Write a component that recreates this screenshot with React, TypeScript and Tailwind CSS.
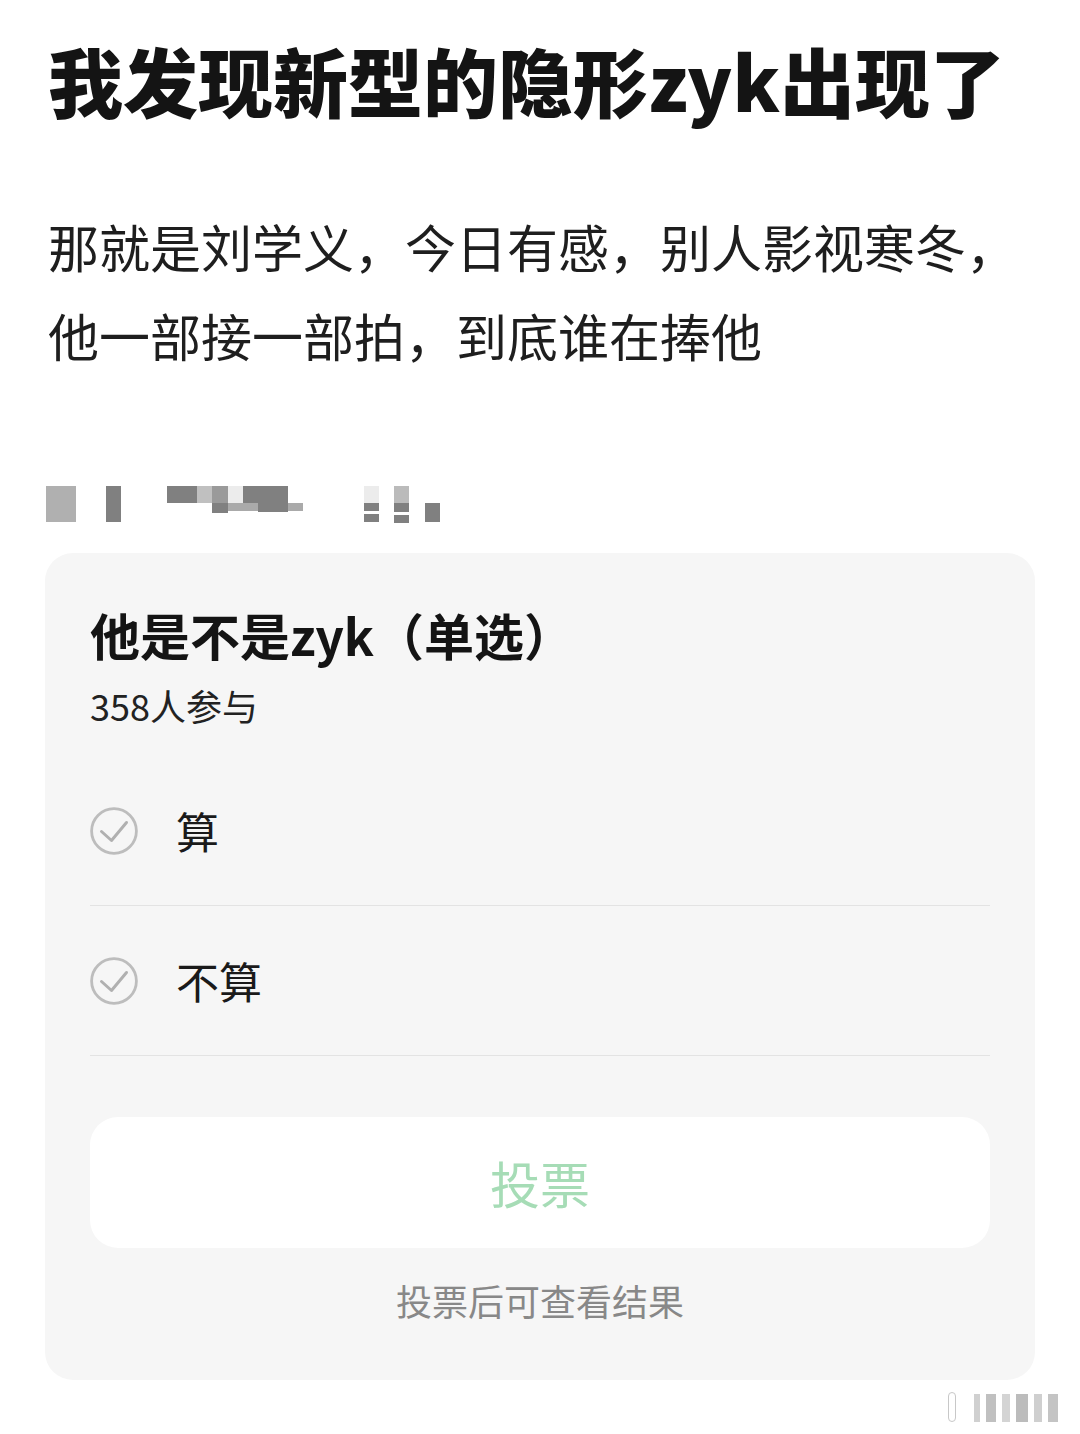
import React from "react";

const CJK = { fontFamily: '"Noto Sans CJK SC", "Noto Sans", sans-serif' };

function CheckCircle() {
  return (
    <svg width="48" height="48" viewBox="0 0 48 48" fill="none">
      <circle cx="24" cy="24" r="22.4" stroke="#bdbdbd" strokeWidth="2.8" />
      <path d="M11.5 24.5 L21.5 33.5 L36.5 15.5" stroke="#b0b0b0" strokeWidth="3" strokeLinecap="round" strokeLinejoin="round" />
    </svg>
  );
}

function Option({ label }: { label: string }) {
  return (
    <div className="flex h-[150px] items-center border-b border-[#e3e3e3]">
      <CheckCircle />
      <span className="ml-[38px] text-[43px] leading-none text-[#1a1a1a]">{label}</span>
    </div>
  );
}

function Mosaic() {
  return (
    <div className="flex h-[36px] items-start pl-[46px]">
      <div className="h-[36px] w-[30px] bg-[#b0b0b0]" />
      <div className="ml-[30px] h-[36px] w-[15px] bg-[#808080]" />
      <div className="ml-[46px] flex flex-col">
        <div className="flex">
          <div className="h-[17px] w-[30px] bg-[#808080]" />
          <div className="h-[17px] w-[15px] bg-[#c0c0c0]" />
          <div className="h-[17px] w-[16px] bg-[#9a9a9a]" />
          <div className="h-[17px] w-[15px] bg-[#ececec]" />
          <div className="h-[17px] w-[45px] bg-[#808080]" />
        </div>
        <div className="flex pl-[45px]">
          <div className="h-[10px] w-[16px] bg-[#808080]" />
          <div className="h-[8px] w-[30px] bg-[#aaaaaa]" />
          <div className="h-[9px] w-[30px] bg-[#808080]" />
          <div className="h-[8px] w-[15px] bg-[#aaaaaa]" />
        </div>
      </div>
      <div className="ml-[61px] flex flex-col">
        <div className="h-[17px] w-[15px] bg-[#ececec]" />
        <div className="h-[8px] w-[15px] bg-[#808080]" />
        <div className="mt-[3px] h-[8px] w-[15px] bg-[#808080]" />
      </div>
      <div className="ml-[15px] flex flex-col">
        <div className="h-[17px] w-[15px] bg-[#bbbbbb]" />
        <div className="h-[9px] w-[15px] bg-[#808080]" />
        <div className="mt-[3px] h-[8px] w-[15px] bg-[#808080]" />
      </div>
      <div className="ml-[16px] mt-[17px] h-[19px] w-[15px] bg-[#808080]" />
    </div>
  );
}

export default function App() {
  return (
    <div className="min-h-[1434px] w-[1080px] bg-white" style={CJK}>
      <div className="px-[48px] pt-[35px]">
        <h1 className="whitespace-nowrap text-[75px] font-black leading-[90px] text-[#141414]">
          我发现新型的隐形zyk出现了
        </h1>
        <p className="mt-[77px] whitespace-nowrap text-[51px] leading-[89px] text-[#1e1e1e]">
          那就是刘学义，今日有感，别人影视寒冬，
          <br />
          他一部接一部拍，到底谁在捧他
        </p>
      </div>
      <div className="mt-[106px]">
        <Mosaic />
      </div>
      <div className="mx-[45px] mt-[31px] rounded-[28px] bg-[#f6f6f6] px-[45px] pb-[55px] pt-[50px]">
        <div className="whitespace-nowrap text-[50px] font-bold leading-[62px] text-[#141414]">他是不是zyk（单选）</div>
        <div className="mt-[18px] text-[36px] leading-[44px] text-[#222]">358人参与</div>
        <div className="mt-[29px]">
          <Option label="算" />
          <Option label="不算" />
        </div>
        <button className="mt-[61px] flex h-[131px] w-full items-center justify-center rounded-[28px] bg-white text-[50px] text-[#a6dcb6]">
          投票
        </button>
        <div className="mt-[27px] text-center text-[36px] leading-[50px] text-[#888888]">投票后可查看结果</div>
      </div>
      <div className="mt-[12px] flex justify-end pr-[22px]">
        <div className="flex h-[30px] items-end gap-[6px]">
          <div className="h-[30px] w-[8px] rounded-sm border border-[#c8c8c8] bg-white" />
          <div className="ml-[12px] h-[28px] w-[6px] bg-[#d0d0d0]" />
          <div className="h-[28px] w-[10px] bg-[#c0c0c0]" />
          <div className="h-[28px] w-[8px] bg-[#d4d4d4]" />
          <div className="h-[28px] w-[12px] bg-[#bcbcbc]" />
          <div className="h-[28px] w-[8px] bg-[#cfcfcf]" />
          <div className="h-[28px] w-[10px] bg-[#c4c4c4]" />
        </div>
      </div>
    </div>
  );
}
